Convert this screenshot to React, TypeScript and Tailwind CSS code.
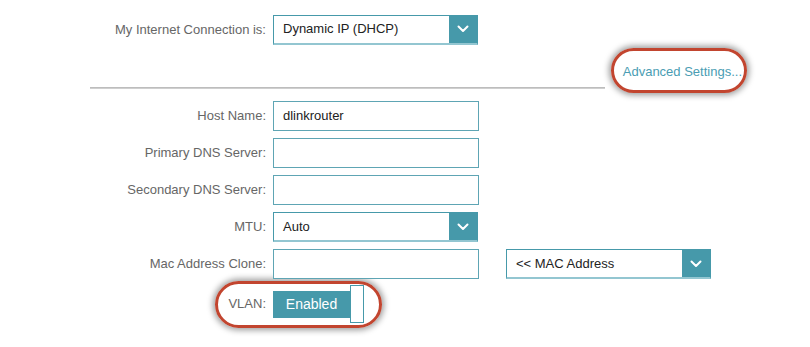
import React from "react";

const label = "w-[266px] mr-[7px] text-right text-[13px] text-[#666]";

function Chevron() {
  return (
    <svg width="12" height="8" viewBox="0 0 12 8" fill="none">
      <polyline points="1.5,1.5 6,6 10.5,1.5" stroke="white" strokeWidth="2" strokeLinecap="round" strokeLinejoin="round" />
    </svg>
  );
}

function Select({ value, w }: { value: string; w: string }) {
  return (
    <div className={`${w} h-[30px] flex border border-[#4699aa] border-b-2 border-b-[#93c6d1] bg-white`}>
      <div className="flex-1 pl-[9px] flex items-center text-[13px] text-[#222]">{value}</div>
      <div className="w-[28px] bg-[#4699aa] flex items-center justify-center">
        <Chevron />
      </div>
    </div>
  );
}

function Input({ value = "" }: { value?: string }) {
  return (
    <div className="w-[206px] h-[30px] border border-[#5ea5b4] bg-white pl-[9px] flex items-center text-[13px] text-[#222]">
      {value}
    </div>
  );
}

function Row({ name, children }: { name: string; children: React.ReactNode }) {
  return (
    <div className="flex items-center h-[30px]">
      <div className={label}>{name}</div>
      {children}
    </div>
  );
}

function Oval({ cls }: { cls: string }) {
  return (
    <div
      className={`absolute rounded-full border-[3px] border-[#c2452f] shadow-[0_0_6px_2px_rgba(0,0,0,0.4)] pointer-events-none ${cls}`}
    />
  );
}

export default function App() {
  return (
    <div className="relative w-[810px] h-[347px] bg-white overflow-hidden font-['Liberation_Sans',Arial,sans-serif]">
      <Oval cls="left-[611px] top-[48px] w-[136px] h-[45px]" />
      <Oval cls="left-[215px] top-[281px] w-[167px] h-[47px]" />

      <div className="relative pt-[15px]">
        <div className="flex items-center h-[29px]">
          <div className={label}>My Internet Connection is:</div>
          <Select value="Dynamic IP (DHCP)" w="w-[205px]" />
        </div>

        <div className="mt-[20px] h-[16px] w-[742px] text-right text-[13px] leading-[16px] text-[#4a9db3]">
          Advanced Settings...
        </div>

        <div className="mt-[7px] ml-[90px] w-[515px] h-[2px] bg-[#cfcfcf] border-t border-[#bdbdbd]" />

        <div className="mt-[12px] flex flex-col gap-[7px]">
          <Row name="Host Name:">
            <Input value="dlinkrouter" />
          </Row>
          <Row name="Primary DNS Server:">
            <Input />
          </Row>
          <Row name="Secondary DNS Server:">
            <Input />
          </Row>
          <Row name="MTU:">
            <Select value="Auto" w="w-[205px]" />
          </Row>
          <Row name="Mac Address Clone:">
            <Input />
            <div className="ml-[27px]">
              <Select value="<< MAC Address" w="w-[205px]" />
            </div>
          </Row>
        </div>

        <div className="mt-[6px] h-[38px] flex items-center">
          <div className={label}>VLAN:</div>
          <div className="flex items-center">
            <div className="w-[77px] h-[27px] bg-[#4699aa] text-white text-[14px] flex items-center justify-center">
              Enabled
            </div>
            <div className="w-[14px] h-[38px] border border-[#4699aa] bg-white" />
          </div>
        </div>
      </div>
    </div>
  );
}
